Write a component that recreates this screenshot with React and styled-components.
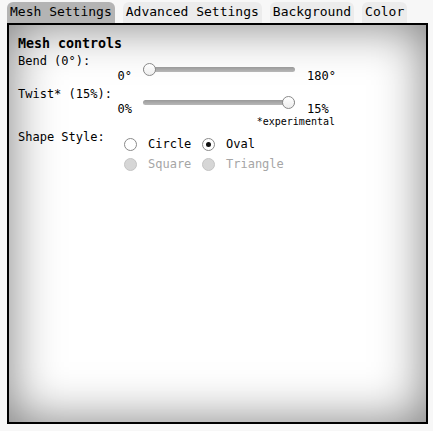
import React from "react";
import styled, { createGlobalStyle } from "styled-components";

const GlobalStyle = createGlobalStyle`
  html, body {
    margin: 0;
    padding: 0;
    background: #f7f7f7;
    font-family: "DejaVu Sans Mono", monospace;
    color: #000;
  }
`;

const Page = styled.div`
  padding: 2px 5px 0 7px;
`;

const TabBar = styled.div`
  display: flex;
  gap: 8px;
  height: 21px;
`;

const Tab = styled.div`
  padding: 0 3px;
  height: 21px;
  line-height: 20px;
  font-size: 13px;
  border-radius: 6px 6px 0 0;
  background: ${(p) => (p.$active ? "#b4b4b4" : "#ececec")};
  white-space: nowrap;
`;

const Panel = styled.div`
  box-sizing: border-box;
  width: 421px;
  height: 401px;
  border: 2px solid #000;
  background: #fff;
  box-shadow: inset 0 0 50px rgba(0, 0, 0, 0.52);
  padding: 11px 9px;
`;

const Heading = styled.div`
  font-size: 13.3px;
  font-weight: bold;
  line-height: 16px;
`;

const FieldLabel = styled.div`
  font-size: 12px;
  line-height: 14px;
  margin-top: ${(p) => p.$mt || 0}px;
`;

const SliderRow = styled.div`
  display: flex;
  align-items: flex-end;
  margin-top: -5px;
  font-size: 12px;
  line-height: 14px;
`;

const MinLabel = styled.span`
  width: 114px;
  text-align: right;
`;

const MaxLabel = styled.span`
  margin-left: 12px;
`;

const Range = styled.input.attrs({ type: "range" })`
  -webkit-appearance: none;
  appearance: none;
  width: 152px;
  height: 13px;
  margin: 0 0 7px 11px;
  padding: 0;
  background: transparent;

  &::-webkit-slider-runnable-track {
    height: 5px;
    border-radius: 3px;
    background: linear-gradient(#9a9a9a, #b8b8b8);
  }

  &::-webkit-slider-thumb {
    -webkit-appearance: none;
    box-sizing: border-box;
    width: 13px;
    height: 13px;
    margin-top: -4px;
    border-radius: 50%;
    border: 1px solid #8a8a8a;
    background: linear-gradient(#fff, #ededed);
  }
`;

const Note = styled.div`
  width: 317px;
  text-align: right;
  font-size: 10px;
  line-height: 12px;
`;

const ShapeRow = styled.div`
  display: flex;
  align-items: flex-start;
  margin-top: 2px;
  font-size: 12px;
  line-height: 14px;
`;

const ShapeLabel = styled.span`
  width: 106px;
`;

const RadioGrid = styled.div`
  display: grid;
  grid-template-columns: 78px auto;
  grid-auto-rows: 20px;
  margin-top: 4px;
`;

const Option = styled.label`
  display: flex;
  align-items: center;
  color: ${(p) => (p.$disabled ? "#a6a6a6" : "#000")};
`;

const Radio = styled.input.attrs({ type: "radio" })`
  -webkit-appearance: none;
  appearance: none;
  box-sizing: border-box;
  width: 13px;
  height: 13px;
  margin: 0 11px 0 0;
  border-radius: 50%;
  border: 1px solid #8a8a8a;
  background: #fff;
  display: grid;
  place-content: center;

  &:checked::before {
    content: "";
    width: 5px;
    height: 5px;
    border-radius: 50%;
    background: #111;
  }

  &:disabled {
    border-color: #c4c4c4;
    background: #d6d6d6;
  }
`;

export default function App() {
  return (
    <Page>
      <GlobalStyle />
      <TabBar>
        <Tab $active>Mesh Settings</Tab>
        <Tab>Advanced Settings</Tab>
        <Tab>Background</Tab>
        <Tab>Color</Tab>
      </TabBar>
      <Panel>
        <Heading>Mesh controls</Heading>

        <FieldLabel $mt={2}>Bend (0°):</FieldLabel>
        <SliderRow>
          <MinLabel>0°</MinLabel>
          <Range min={0} max={180} defaultValue={0} />
          <MaxLabel>180°</MaxLabel>
        </SliderRow>

        <FieldLabel $mt={4}>Twist* (15%):</FieldLabel>
        <SliderRow>
          <MinLabel>0%</MinLabel>
          <Range min={0} max={15} defaultValue={15} />
          <MaxLabel>15%</MaxLabel>
        </SliderRow>
        <Note>*experimental</Note>

        <ShapeRow>
          <ShapeLabel>Shape Style:</ShapeLabel>
          <RadioGrid>
            <Option>
              <Radio name="shape" />
              Circle
            </Option>
            <Option>
              <Radio name="shape" defaultChecked />
              Oval
            </Option>
            <Option $disabled>
              <Radio name="shape" disabled />
              Square
            </Option>
            <Option $disabled>
              <Radio name="shape" disabled />
              Triangle
            </Option>
          </RadioGrid>
        </ShapeRow>
      </Panel>
    </Page>
  );
}
